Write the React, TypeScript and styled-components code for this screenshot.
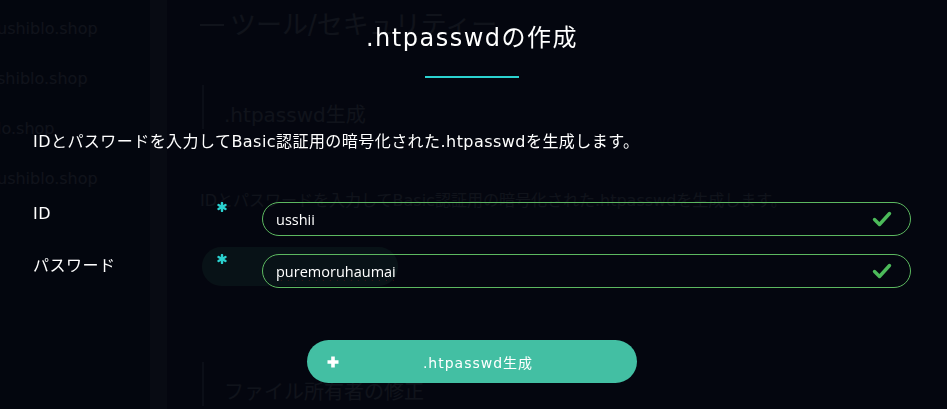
import React from "react";
import styled, { createGlobalStyle } from "styled-components";

const GlobalStyle = createGlobalStyle`
  html, body {
    margin: 0;
    padding: 0;
    height: 100%;
    background: #03060f;
    overflow: hidden;
  }
  body {
    font-family: "DejaVu Sans", "Noto Sans CJK JP", sans-serif;
  }
`;

const Page = styled.div`
  display: flex;
  height: 409px;
  background: #1a1e2e;
`;

const Sidebar = styled.div`
  width: 150px;
  background: #141722;
  overflow: hidden;
  display: flex;
  flex-direction: column;
  padding-top: 17px;
  gap: 26px;
`;

const SideItem = styled.div`
  color: #9aa2ae;
  font-size: 16px;
  line-height: 24px;
  white-space: nowrap;
  margin-left: -3px;
`;

const Strip = styled.div`
  width: 17px;
  background: #4a4d56;
`;

const Main = styled.div`
  flex: 1;
  padding: 9px 0 0 33px;
  display: flex;
  flex-direction: column;
`;

const PageTitle = styled.h1`
  margin: 0;
  display: flex;
  align-items: center;
  gap: 6px;
  color: #9aa2ae;
  font-size: 26px;
  font-weight: normal;
  line-height: 32px;
  &::before {
    content: "";
    width: 24px;
    height: 2px;
    background: #9aa2ae;
  }
`;

const Section = styled.h2<{ $top: number }>`
  margin: ${(p) => p.$top}px 0 0 2px;
  padding-left: 20px;
  border-left: 2px solid #6a7484;
  color: #9aa2ae;
  font-size: 20px;
  font-weight: normal;
  line-height: 28px;
  padding-top: 16px;
`;

const PageText = styled.p`
  margin: 60px 0 0;
  color: #9aa2ae;
  font-size: 16px;
  line-height: 24px;
`;

const PagePill = styled.div`
  margin: 34px 0 0 2px;
  width: 196px;
  height: 39px;
  border-radius: 20px;
  background: #4a9a80;
`;

const Overlay = styled.div`
  position: fixed;
  inset: 0;
  background: rgba(2, 4, 12, 0.91);
  display: flex;
  padding: 0 36px 0 33px;
`;

const Modal = styled.div`
  flex: 1;
  display: flex;
  flex-direction: column;
  align-items: stretch;
  padding-top: 22px;
  color: #ffffff;
`;

const Title = styled.h1`
  margin: 0;
  text-align: center;
  font-size: 24px;
  font-weight: normal;
  line-height: 32px;
  letter-spacing: 1.5px;
`;

const TitleBar = styled.div`
  align-self: center;
  width: 94px;
  height: 2px;
  margin-top: 22px;
  background: #2bd2d0;
`;

const Lead = styled.p`
  margin: 52px 0 0;
  font-size: 16px;
  line-height: 24px;
  letter-spacing: 0.45px;
`;

const Form = styled.div`
  margin-top: 48px;
  display: flex;
  flex-direction: column;
  gap: 18px;
`;

const Row = styled.div`
  display: grid;
  grid-template-columns: 184px 45px 1fr;
  align-items: start;
`;

const Label = styled.div`
  font-size: 16px;
  line-height: 24px;
  letter-spacing: 0.5px;
`;

const Required = styled.div`
  color: #2bd2d0;
  line-height: 0;
`;

const Field = styled.div`
  height: 34px;
  box-sizing: border-box;
  border: 1px solid #5cb860;
  border-radius: 17px;
  display: flex;
  align-items: center;
  padding: 0 18px 0 13px;
`;

const Input = styled.input<{ $misspelled?: boolean }>`
  flex: 1;
  background: transparent;
  border: none;
  outline: none;
  color: #ffffff;
  font-family: "Open Sans", sans-serif;
  font-size: 14.5px;
  padding: 0;
  text-decoration: ${(p) => (p.$misspelled ? "underline wavy #e02020" : "none")};
  text-decoration-thickness: 1px;
  text-underline-offset: 3px;
`;

const Submit = styled.button`
  align-self: center;
  margin-top: 52px;
  width: 330px;
  height: 43px;
  border: none;
  border-radius: 22px;
  background: #43bfa3;
  color: #ffffff;
  display: flex;
  align-items: center;
  padding: 0 20px;
  font-family: "DejaVu Sans", "Noto Sans CJK JP", sans-serif;
  font-size: 14px;
  letter-spacing: 1px;
  cursor: pointer;
`;

const SubmitText = styled.span`
  flex: 1;
  text-align: center;
`;

const Asterisk = () => (
  <svg width="10" height="10" viewBox="0 0 10 10">
    <g stroke="#2bd2d0" strokeWidth="2.4" strokeLinecap="round">
      <line x1="5" y1="1" x2="5" y2="9" />
      <line x1="1.5" y1="3" x2="8.5" y2="7" />
      <line x1="1.5" y1="7" x2="8.5" y2="3" />
    </g>
  </svg>
);

const Check = () => (
  <svg width="20" height="16" viewBox="0 0 20 16">
    <path
      d="M2.5 8.5 L7.5 13.5 L17.5 2.5"
      fill="none"
      stroke="#4cba5a"
      strokeWidth="3.4"
      strokeLinecap="round"
      strokeLinejoin="round"
    />
  </svg>
);

const Plus = () => (
  <svg width="12" height="12" viewBox="0 0 12 12">
    <path d="M6 0.5 V11.5 M0.5 6 H11.5" stroke="#ffffff" strokeWidth="3.6" />
  </svg>
);

const fields = [
  { label: "ID", value: "usshii", misspelled: false },
  { label: "パスワード", value: "puremoruhaumai", misspelled: true },
];

const App: React.FC = () => {
  return (
    <>
      <GlobalStyle />
      <Page>
        <Sidebar>
          <SideItem>ushiblo.shop</SideItem>
          <SideItem>shiblo.shop</SideItem>
          <SideItem>lo.shop</SideItem>
          <SideItem>ushiblo.shop</SideItem>
        </Sidebar>
        <Strip />
        <Main>
          <PageTitle>ツール/セキュリティー</PageTitle>
          <Section $top={44}>.htpasswd生成</Section>
          <PageText>IDとパスワードを入力してBasic認証用の暗号化された.htpasswdを生成します。</PageText>
          <PagePill />
          <Section $top={76}>ファイル所有者の修正</Section>
        </Main>
      </Page>
      <Overlay>
        <Modal>
          <Title>.htpasswdの作成</Title>
          <TitleBar />
          <Lead>IDとパスワードを入力してBasic認証用の暗号化された.htpasswdを生成します。</Lead>
          <Form>
            {fields.map((f) => (
              <Row key={f.label}>
                <Label>{f.label}</Label>
                <Required>
                  <Asterisk />
                </Required>
                <Field>
                  <Input readOnly value={f.value} $misspelled={f.misspelled} spellCheck={false} />
                  <Check />
                </Field>
              </Row>
            ))}
          </Form>
          <Submit>
            <Plus />
            <SubmitText>.htpasswd生成</SubmitText>
          </Submit>
        </Modal>
      </Overlay>
    </>
  );
};

export default App;
